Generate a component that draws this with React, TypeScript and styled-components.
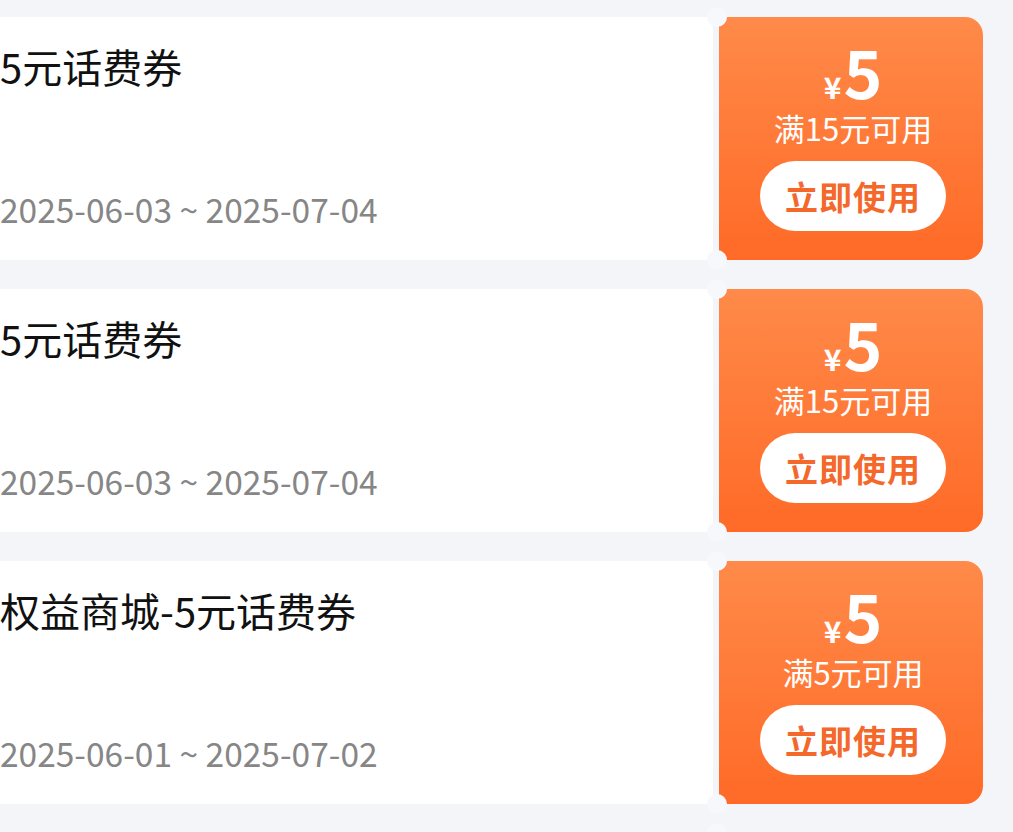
import React from "react";
import styled, { createGlobalStyle } from "styled-components";

const GlobalStyle = createGlobalStyle`
  html, body {
    margin: 0;
    padding: 0;
    background: #f4f5f9;
    font-family: "Noto Sans CJK SC", "Noto Sans", sans-serif;
  }
`;

const List = styled.div`
  display: flex;
  flex-direction: column;
  gap: 29px;
  padding: 17px 30px 0 0;
  width: 983px;
  height: 815px;
  overflow: hidden;
`;

const Card = styled.div`
  position: relative;
  display: flex;
  flex-shrink: 0;
  height: 243px;
  gap: 6px;
`;

const Info = styled.div`
  flex: 1;
  background: #fff;
  display: flex;
  flex-direction: column;
  justify-content: space-between;
  padding: 25px 0 31px;
`;

const Title = styled.div`
  font-size: 40px;
  line-height: 48px;
  font-weight: 400;
  color: #111;
`;

const Period = styled.div`
  font-size: 33.5px;
  line-height: 40px;
  color: #868686;
  font-weight: 400;
`;

const Value = styled.div`
  width: 264px;
  border-radius: 0 18px 18px 0;
  background: linear-gradient(180deg, #ff8a49 0%, #ff6a27 100%);
  color: #fff;
  display: flex;
  flex-direction: column;
  align-items: center;
  justify-content: center;
  padding: 0 0 6px 4px;
  box-sizing: border-box;
`;

const Amount = styled.div`
  display: flex;
  align-items: baseline;
  line-height: 60px;
  height: 60px;
  margin-bottom: 9px;
  font-weight: 700;
`;

const Yen = styled.span`
  font-size: 30px;
  margin-right: 2px;
`;

const Num = styled.span`
  font-size: 66px;
  font-weight: 600;
`;

const Rule = styled.div`
  font-size: 31px;
  line-height: 38px;
`;

const UseButton = styled.button`
  margin-top: 14px;
  width: 186px;
  height: 70px;
  border: none;
  border-radius: 35px;
  background: #fff;
  color: #f4692b;
  font-family: inherit;
  font-size: 33px;
  font-weight: 700;
  letter-spacing: 1px;
  padding: 0;
`;

const Notch = styled.span<{ $edge: "top" | "bottom" }>`
  position: absolute;
  left: 707px;
  ${(p) => (p.$edge === "top" ? "top: -10px;" : "bottom: -10px;")}
  width: 20px;
  height: 20px;
  border-radius: 50%;
  background: #f7f8fb;
`;

const coupons = [
  { title: "5元话费券", period: "2025-06-03 ~ 2025-07-04", min: 15 },
  { title: "5元话费券", period: "2025-06-03 ~ 2025-07-04", min: 15 },
  { title: "权益商城-5元话费券", period: "2025-06-01 ~ 2025-07-02", min: 5 },
  { title: "5元话费券", period: "2025-06-01 ~ 2025-07-02", min: 5 },
];

export default function App() {
  return (
    <>
      <GlobalStyle />
      <List>
        {coupons.map((c, i) => (
          <Card key={i}>
            <Info>
              <Title>{c.title}</Title>
              <Period>{c.period}</Period>
            </Info>
            <Value>
              <Amount>
                <Yen>¥</Yen>
                <Num>5</Num>
              </Amount>
              <Rule>满{c.min}元可用</Rule>
              <UseButton>立即使用</UseButton>
            </Value>
            <Notch $edge="top" />
            <Notch $edge="bottom" />
          </Card>
        ))}
      </List>
    </>
  );
}
